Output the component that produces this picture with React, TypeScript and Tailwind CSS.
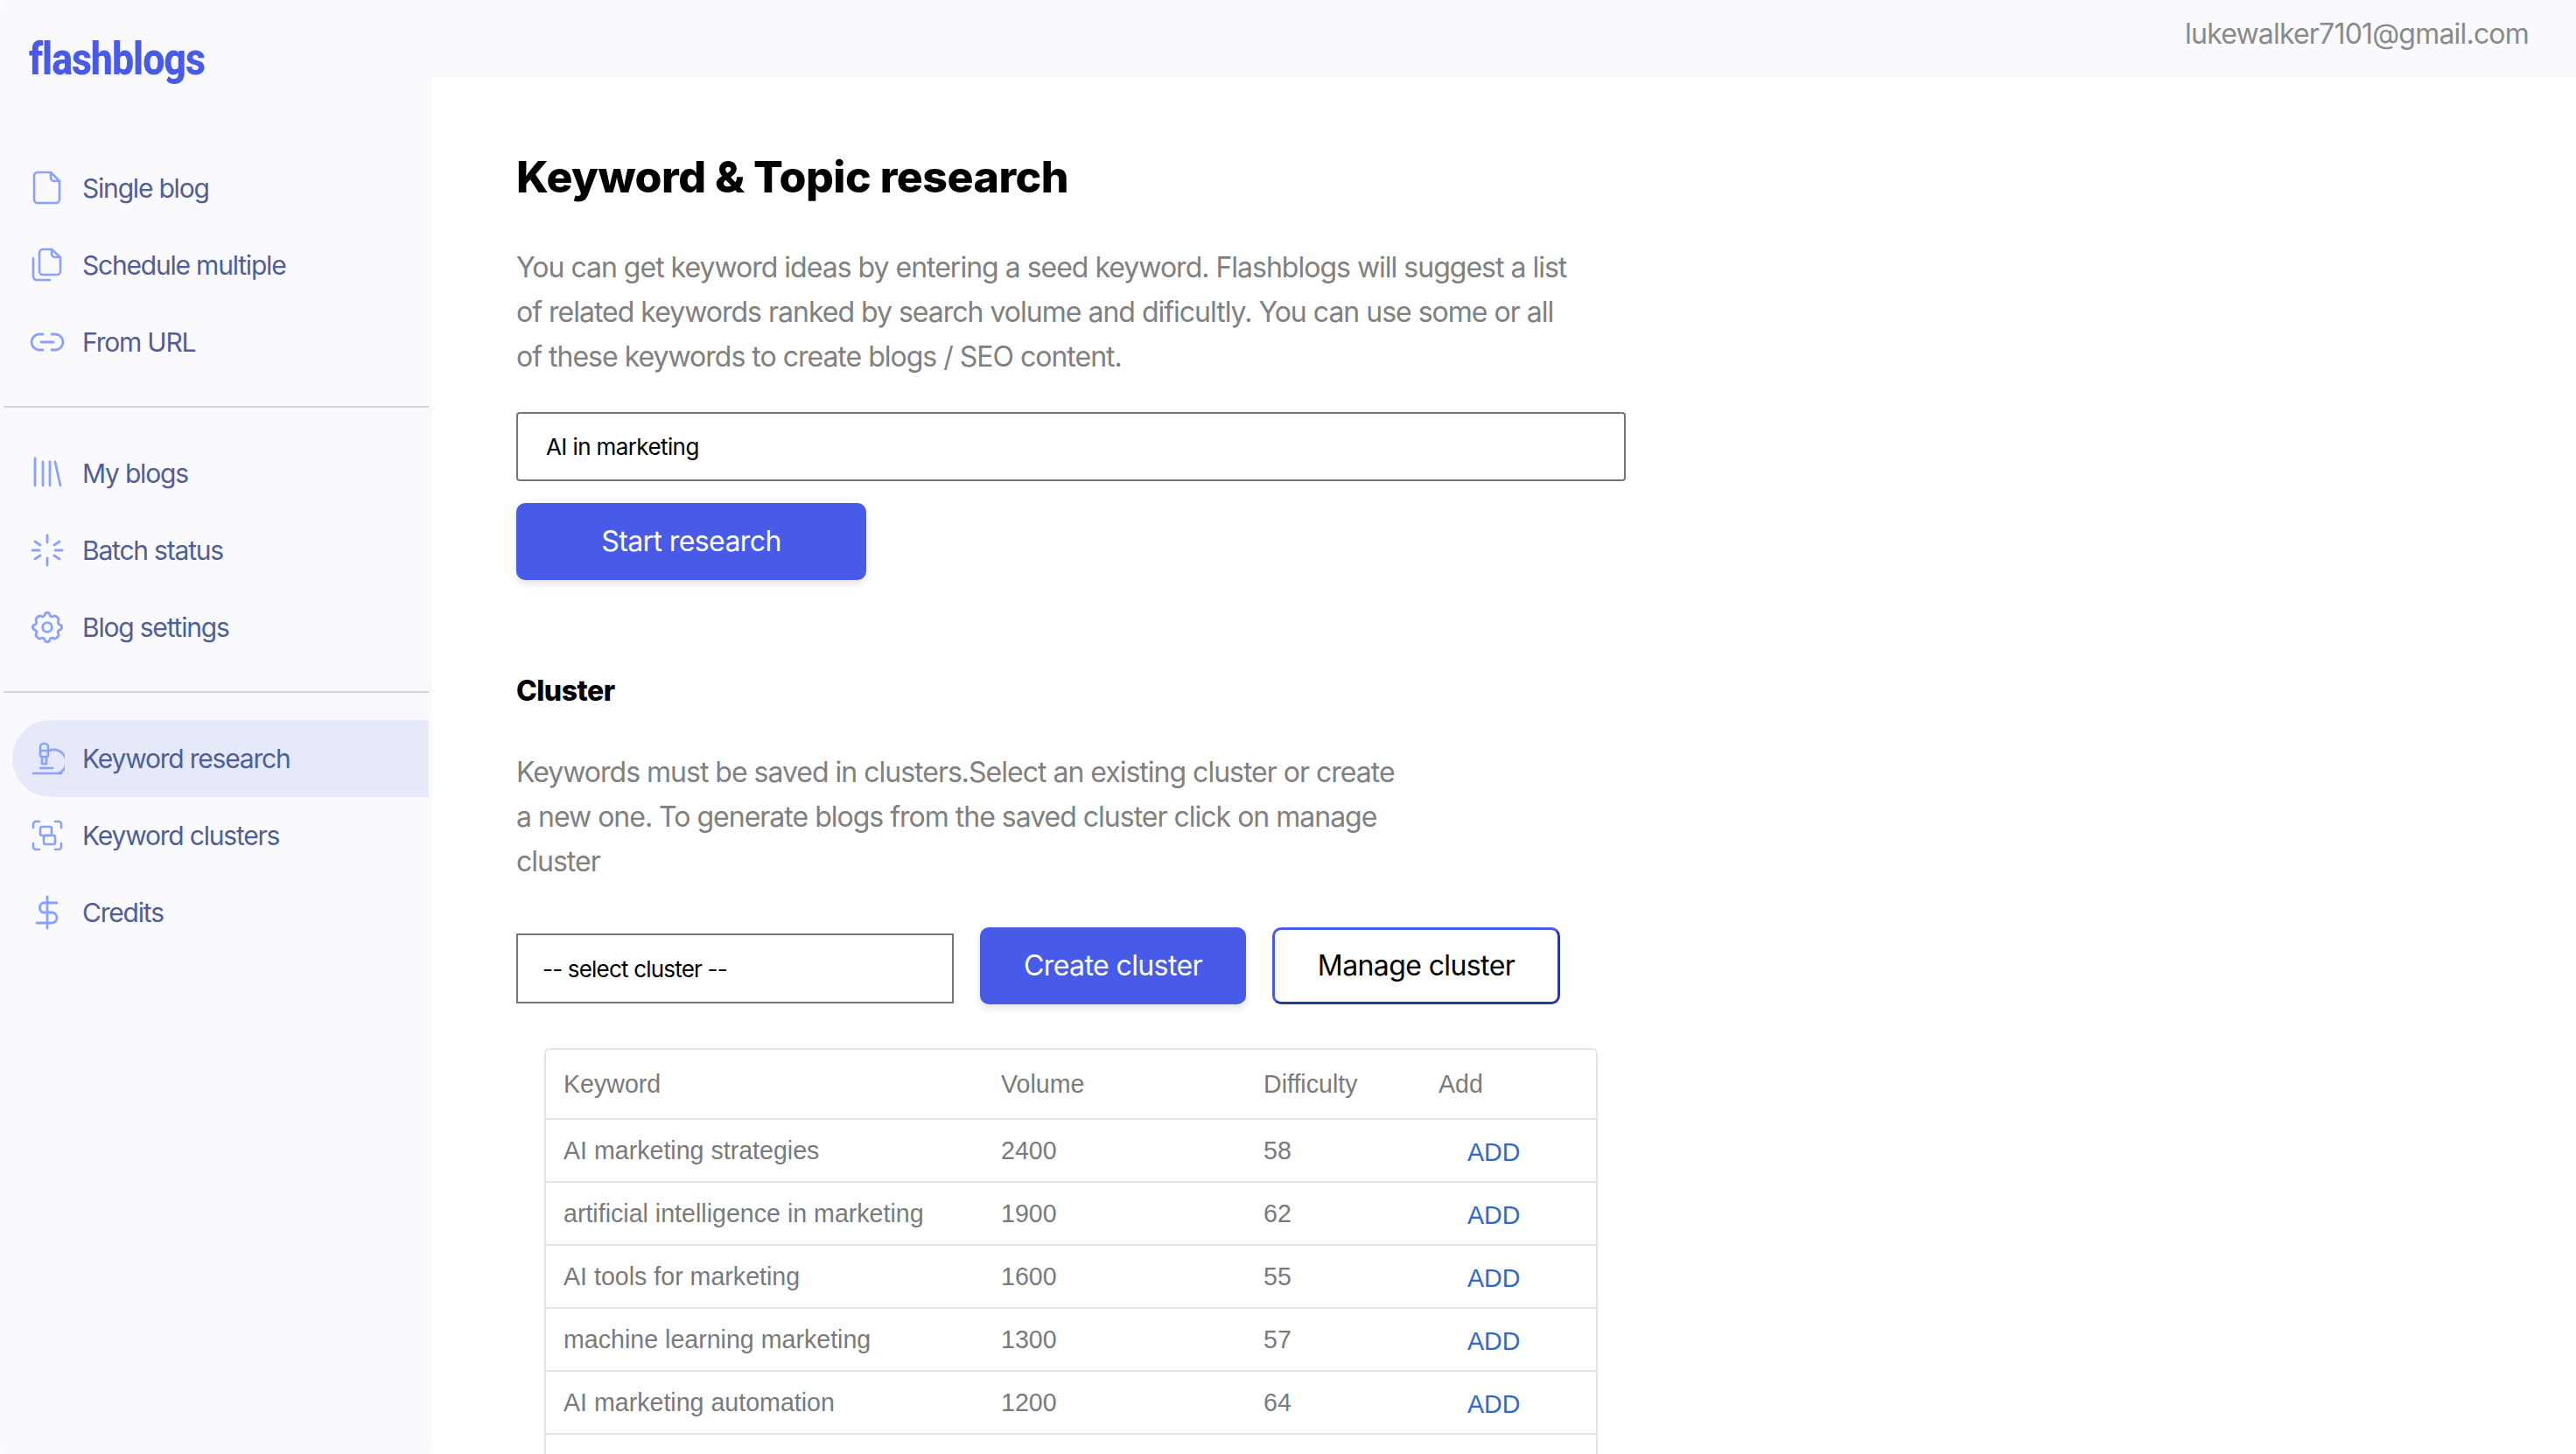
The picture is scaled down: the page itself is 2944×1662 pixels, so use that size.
const sans = "font-['Inter',sans-serif]";

function FileIcon() {
  return (
    <svg viewBox="0 0 40 40" className="w-10 h-10" fill="none" stroke="#8aa2ff" strokeWidth="2.6" strokeLinecap="round" strokeLinejoin="round">
      <path d="M9 2h15l10 10v21a4 4 0 0 1-4 4H9a4 4 0 0 1-4-4V6a4 4 0 0 1 4-4z" />
      <path d="M24 2v6a4 4 0 0 0 4 4h6" />
    </svg>
  );
}

function CopyIcon() {
  return (
    <svg viewBox="0 0 40 40" className="w-10 h-10" fill="none" stroke="#8aa2ff" strokeWidth="2.6" strokeLinecap="round" strokeLinejoin="round">
      <path d="M15 2h10l10 9v16a4 4 0 0 1-4 4H15a4 4 0 0 1-4-4V6a4 4 0 0 1 4-4z" />
      <path d="M25 2v5a4 4 0 0 0 4 4h6" />
      <path d="M4 12v21a4 4 0 0 0 4 4h15" />
    </svg>
  );
}

function LinkIcon() {
  return (
    <svg viewBox="0 0 40 40" className="w-10 h-10" fill="none" stroke="#8aa2ff" strokeWidth="2.8" strokeLinecap="round" strokeLinejoin="round">
      <path d="M15 11h-4a9 9 0 0 0 0 18h4" />
      <path d="M25 11h4a9 9 0 0 1 0 18h-4" />
      <path d="M13 20h14" />
    </svg>
  );
}

function BooksIcon() {
  return (
    <svg viewBox="0 0 40 40" className="w-10 h-10" fill="none" stroke="#8aa2ff" strokeWidth="2.8" strokeLinecap="round" strokeLinejoin="round">
      <path d="M6 3v31" />
      <path d="M15 7v27" />
      <path d="M23 7v27" />
      <path d="M29 7l6 27" />
    </svg>
  );
}

function LoaderIcon() {
  return (
    <svg viewBox="0 0 40 40" className="w-10 h-10" fill="none" stroke="#8aa2ff" strokeWidth="2.8" strokeLinecap="round">
      <path d="M20 3v8" />
      <path d="M20 29v8" />
      <path d="M3 20h8" />
      <path d="M29 20h8" />
      <path d="M6 10l6 4" />
      <path d="M28 26l6 4" />
      <path d="M6 30l6-4" />
      <path d="M28 14l6-4" />
    </svg>
  );
}

function GearIcon() {
  return (
    <svg viewBox="0 0 24 24" className="w-10 h-10" fill="none" stroke="#8aa2ff" strokeWidth="1.7" strokeLinecap="round" strokeLinejoin="round">
      <path d="M10.300 3.300c.4-1.800 3-1.800 3.400 0a1.700 1.700 0 0 0 2.600 1.100c1.500-.9 4.200 1.800 3.300 3.400a1.700 1.700 0 0 0 1 2.500c1.800.4 1.800 3 0 3.400a1.700 1.700 0 0 0-1 2.600c.9 1.500-1.800 4.200-3.300 3.300a1.700 1.700 0 0 0-2.600 1.100c-.4 1.800-3 1.800-3.400 0a1.700 1.700 0 0 0-2.600-1.100c-1.500.9-4.200-1.800-3.300-3.300a1.700 1.700 0 0 0-1-2.600c-1.800-.4-1.800-3 0-3.400a1.700 1.700 0 0 0 1-2.500c-.9-1.600 1.800-4.300 3.300-3.400a1.700 1.700 0 0 0 2.600-1.100z" />
      <circle cx="12" cy="12" r="3.200" />
    </svg>
  );
}

function MicroscopeIcon() {
  return (
    <svg viewBox="0 0 40 40" className="w-10 h-10" fill="none" stroke="#8aa2ff" strokeWidth="2.6" strokeLinecap="round" strokeLinejoin="round">
      <path d="M4 37h32" />
      <path d="M12 31h14" />
      <path d="M12 7a4 4 0 0 1 4-4h1a4 4 0 0 1 4 4v9a2 2 0 0 1-2 2h-5a2 2 0 0 1-2-2z" />
      <path d="M12 11h9" />
      <path d="M14 18v8h5v-8" />
      <path d="M22 11a13 13 0 0 1 11 26" />
    </svg>
  );
}

function ClusterIcon() {
  return (
    <svg viewBox="0 0 40 40" className="w-10 h-10" fill="none" stroke="#8aa2ff" strokeWidth="2.6" strokeLinecap="round" strokeLinejoin="round">
      <path d="M4 11V7a3 3 0 0 1 3-3h4" />
      <path d="M29 4h4a3 3 0 0 1 3 3v4" />
      <path d="M36 29v4a3 3 0 0 1-3 3h-4" />
      <path d="M11 36H7a3 3 0 0 1-3-3v-4" />
      <rect x="12" y="10" width="13" height="10" rx="2" />
      <rect x="16" y="20" width="13" height="10" rx="2" />
    </svg>
  );
}

function DollarIcon() {
  return (
    <svg viewBox="0 0 40 40" className="w-10 h-10" fill="none" stroke="#8aa2ff" strokeWidth="2.8" strokeLinecap="round" strokeLinejoin="round">
      <path d="M20 2v36" />
      <path d="M31 9H15a6 6 0 0 0 0 11h10a6 6 0 0 1 0 12H8" />
    </svg>
  );
}

const groups = [
  [
    { label: "Single blog", icon: <FileIcon /> },
    { label: "Schedule multiple", icon: <CopyIcon /> },
    { label: "From URL", icon: <LinkIcon /> },
  ],
  [
    { label: "My blogs", icon: <BooksIcon /> },
    { label: "Batch status", icon: <LoaderIcon /> },
    { label: "Blog settings", icon: <GearIcon /> },
  ],
  [
    { label: "Keyword research", icon: <MicroscopeIcon />, active: true },
    { label: "Keyword clusters", icon: <ClusterIcon /> },
    { label: "Credits", icon: <DollarIcon /> },
  ],
];

const keywords = [
  { name: "AI marketing strategies", volume: 2400, difficulty: 58 },
  { name: "artificial intelligence in marketing", volume: 1900, difficulty: 62 },
  { name: "AI tools for marketing", volume: 1600, difficulty: 55 },
  { name: "machine learning marketing", volume: 1300, difficulty: 57 },
  { name: "AI marketing automation", volume: 1200, difficulty: 64 },
];

function NavItem({ label, icon, active }: { label: string; icon: React.ReactNode; active?: boolean }) {
  return (
    <a
      className={
        active
          ? "flex items-center gap-[20px] h-[88px] ml-[10px] pl-[20px] rounded-l-[44px] bg-[#e5e9fa] text-[30px] tracking-[-1.2px] text-[#4f5f96]"
          : "flex items-center gap-[20px] h-[88px] pl-[30px] text-[30px] tracking-[-1.2px] text-[#4f5f96]"
      }
    >
      {icon}
      <span>{label}</span>
    </a>
  );
}

export default function App() {
  return (
    <div className={`flex h-screen overflow-hidden bg-white ${sans}`}>
      <aside className="w-[486px] ml-[4px] shrink-0 bg-[#f9f9fe] shadow-[0_0_12px_rgba(0,0,0,0.06)]">
        <div className="h-[171px] pt-[33px] pl-[29px]">
          <span className="inline-block origin-left scale-x-[0.86] font-['Roboto',sans-serif] font-extrabold text-[52px] leading-[70px] tracking-[-1.2px] text-[#475be8]">
            flashblogs
          </span>
        </div>
        {groups.map((items, i) => (
          <div key={i}>
            {i > 0 && <div className="h-[2px] bg-[#d4d4d4] mt-[29px] mb-[31px]" />}
            {items.map((item) => (
              <NavItem key={item.label} {...item} />
            ))}
          </div>
        ))}
      </aside>

      <div className="flex-1 min-w-0 flex flex-col">
        <header className="h-[88px] shrink-0 flex justify-end items-start pt-[15px] pr-[54px] bg-[#f9f9fe] text-[32px] tracking-[-0.8px] text-[#8a8a8a]">
          lukewalker7101@gmail.com
        </header>

        <main className="pl-[100px] pt-[84px]">
          <h1 className="font-extrabold text-[50px] leading-[60px] tracking-[-0.5px] text-black">Keyword &amp; Topic research</h1>
          <p className="mt-[48px] w-[1210px] text-[32px] leading-[51px] tracking-[-1px] text-[#808080]">
            You can get keyword ideas by entering a seed keyword. Flashblogs will suggest a list
            of related keywords ranked by search volume and dificultly. You can use some or all
            of these keywords to create blogs / SEO content.
          </p>

          <input
            readOnly
            value="AI in marketing"
            className="block mt-[38px] w-[1268px] h-[79px] px-[32px] border-2 border-[#757575] rounded-[4px] text-[26px] tracking-[-0.6px] text-black outline-none"
          />
          <button className="block mt-[25px] w-[400px] h-[88px] rounded-[10px] bg-[#475be8] text-[32px] tracking-[-0.6px] text-white shadow-[0_4px_10px_rgba(0,0,0,0.12)]">
            Start research
          </button>

          <h2 className="mt-[107px] font-extrabold text-[32px] leading-[40px] tracking-[-0.5px] text-black">Cluster</h2>
          <p className="mt-[47px] w-[1015px] text-[32px] leading-[51px] tracking-[-1px] text-[#808080]">
            Keywords must be saved in clusters.Select an existing cluster or create a new one. To generate blogs from the saved cluster click on manage cluster
          </p>

          <div className="flex items-end gap-[30px] mt-[50px]">
            <select className="w-[500px] h-[80px] mb-[1px] px-[28px] border-2 border-[#757575] bg-white text-[26px] tracking-[-0.8px] text-black outline-none appearance-none">
              <option>-- select cluster --</option>
            </select>
            <button className="w-[304px] h-[88px] rounded-[10px] bg-[#475be8] text-[32px] tracking-[-0.6px] text-white shadow-[0_4px_10px_rgba(0,0,0,0.12)]">
              Create cluster
            </button>
            <button className="w-[329px] h-[88px] rounded-[10px] border-[3px] border-[#475be8] border-r-[#2a3a9e] border-b-[#2a3a9e] bg-white text-[32px] tracking-[-0.6px] text-black">
              Manage cluster
            </button>
          </div>

          <div className="mt-[50px] ml-[32px] w-[1204px] border-2 border-[#e5e5e5] rounded-[6px] font-['Liberation_Sans',sans-serif] text-[28.6px] text-[#7a7a7a]">
            <div className="grid grid-cols-[500px_300px_200px_1fr] items-center h-[78px] pl-[20px]">
              <span>Keyword</span>
              <span>Volume</span>
              <span>Difficulty</span>
              <span>Add</span>
            </div>
            {keywords.map((row) => (
              <div key={row.name} className="grid grid-cols-[500px_300px_200px_1fr] items-center h-[72px] pl-[20px] border-t-2 border-[#e5e5e5]">
                <span>{row.name}</span>
                <span>{row.volume}</span>
                <span>{row.difficulty}</span>
                <span className="pl-[33px] pt-[5px] text-[#2f6bc9]">ADD</span>
              </div>
            ))}
            <div className="h-[72px] border-t-2 border-[#e5e5e5]" />
          </div>
        </main>
      </div>
    </div>
  );
}
